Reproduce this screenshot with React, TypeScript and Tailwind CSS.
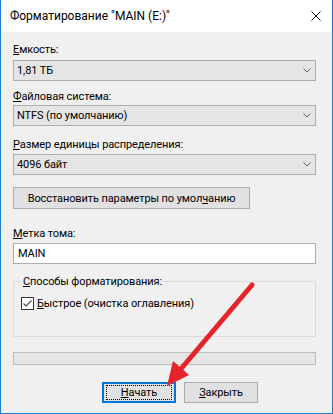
import React from "react";

const font = { fontFamily: 'Roboto, "Liberation Sans", Arial, sans-serif' };

function Chevron() {
  return (
    <svg width="8" height="5" viewBox="0 0 8 5" className="shrink-0">
      <path d="M0.5 0.5 L4 4 L7.5 0.5" fill="none" stroke="#606060" strokeWidth="1" />
    </svg>
  );
}

function Combo({ value }: { value: string }) {
  return (
    <div className="flex h-[21px] items-center justify-between border border-[#adadad] bg-[#e5e5e5] pl-[3px] pr-[4px] text-black">
      <span>{value}</span>
      <Chevron />
    </div>
  );
}

export default function App() {
  return (
    <div
      className="relative flex h-[414px] w-[333px] flex-col overflow-hidden border-x border-b border-[#1a7fd0] bg-[#f0f0f0] text-[11px] leading-[15px] tracking-[-0.1px] text-black"
      style={font}
    >
      {/* Title bar */}
      <div className="flex h-[32px] shrink-0 items-center justify-between bg-white pl-[9px] pr-[11px]">
        <span className="text-[12px] leading-[15px] tracking-normal text-black">Форматирование "MAIN (E:)"</span>
        <svg width="10" height="10" viewBox="0 0 10 10">
          <path d="M0.5 0.5 L9.5 9.5 M9.5 0.5 L0.5 9.5" stroke="#111" strokeWidth="1" />
        </svg>
      </div>

      {/* Body */}
      <div className="flex flex-1 flex-col pl-[12px] pr-[16px]">
        <div className="mt-[10px] h-[15px]">
          <u className="underline-offset-[1px]">Е</u>мкость:
        </div>
        <div className="mt-[3px]">
          <Combo value="1,81 ТБ" />
        </div>

        <div className="mt-[8px] h-[15px]">
          <u className="underline-offset-[1px]">Ф</u>айловая система:
        </div>
        <div className="mt-[1px]">
          <Combo value="NTFS (по умолчанию)" />
        </div>

        <div className="mt-[11px] h-[15px]">
          <u className="underline-offset-[1px]">Р</u>азмер единицы распределения:
        </div>
        <div className="mt-[2px]">
          <Combo value="4096 байт" />
        </div>

        <div className="mt-[12px] flex h-[22px] w-[237px] items-center justify-center border border-[#adadad] bg-[#e1e1e1]">
          <span>
            Восстановить параметры по умол<u className="underline-offset-[1px]">ч</u>анию
          </span>
        </div>

        <div className="mt-[17px] h-[15px]">
          <u className="underline-offset-[1px]">М</u>етка тома:
        </div>
        <div className="mt-[2px] flex h-[21px] items-center border border-[#abadb3] bg-white pl-[4px]">
          MAIN
        </div>

        <fieldset className="mt-[10px] h-[63px] border border-[#dcdcdc] pl-[7px]">
          <legend className="ml-[1px] px-[1px] leading-[15px]">
            <u className="underline-offset-[1px]">С</u>пособы форматирования:
          </legend>
          <div className="mt-[7px] flex items-center gap-[3px]">
            <svg width="13" height="13" viewBox="0 0 13 13" className="shrink-0">
              <rect x="0.5" y="0.5" width="12" height="12" fill="#fff" stroke="#333" />
              <path d="M2.5 6.5 L5 9 L10.5 3.5" fill="none" stroke="#444" strokeWidth="1.1" />
            </svg>
            <span className="leading-[15px]">
              <u className="underline-offset-[1px]">Б</u>ыстрое (очистка оглавления)
            </span>
          </div>
        </fieldset>

        <div className="mt-[15px] h-[13px] border border-[#bcbcbc] bg-[#e6e6e6]" />

        <div className="mt-[17px] flex gap-[8px] pl-[89px]">
          <div className="flex h-[21px] w-[74px] items-center justify-center border-2 border-[#0078d7] bg-[#e1e1e1]">
            <div className="flex h-[15px] w-[66px] items-center justify-center border border-dotted border-black">
              <span>
                <u className="underline-offset-[1px]">Н</u>ачать
              </span>
            </div>
          </div>
          <div className="flex h-[21px] w-[74px] items-center justify-center border border-[#adadad] bg-[#e1e1e1]">
            <span>
              <u className="underline-offset-[1px]">З</u>акрыть
            </span>
          </div>
        </div>
      </div>

      {/* Red arrow annotation overlay */}
      <svg
        className="pointer-events-none absolute left-0 top-0"
        width="333"
        height="414"
        viewBox="0 0 333 414"
      >
        <line x1="251" y1="285" x2="179" y2="370" stroke="#e4232b" strokeWidth="5" strokeLinecap="round" />
        <polygon points="166,386 188,375 172,361" fill="#e4232b" />
      </svg>
    </div>
  );
}
